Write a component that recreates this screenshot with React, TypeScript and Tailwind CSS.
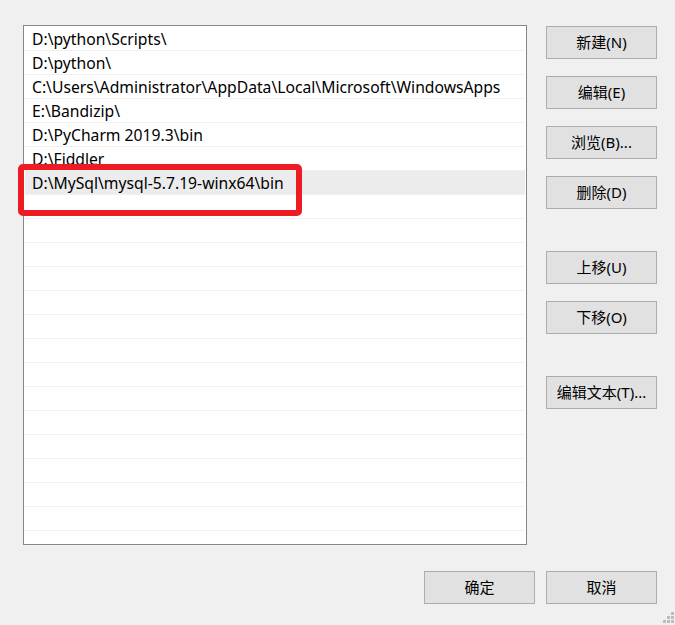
import React from "react";

const paths = [
  "D:\\python\\Scripts\\",
  "D:\\python\\",
  "C:\\Users\\Administrator\\AppData\\Local\\Microsoft\\WindowsApps",
  "E:\\Bandizip\\",
  "D:\\PyCharm 2019.3\\bin",
  "D:\\Fiddler",
  "D:\\MySql\\mysql-5.7.19-winx64\\bin",
];

const TOTAL_ROWS = 21;
const SELECTED = 6;

const Btn = ({ label, className = "" }: { label: string; className?: string }) => (
  <button
    className={`w-[111px] h-[33px] border border-[#adadad] bg-[#e1e1e1] text-[15px] text-black flex items-center justify-center ${className}`}
  >
    {label}
  </button>
);

const App = () => {
  const rows = Array.from({ length: TOTAL_ROWS }, (_, i) => paths[i] ?? "");

  return (
    <div
      className="relative w-[675px] h-[625px] bg-[#f0f0f0] overflow-hidden"
      style={{ fontFamily: '"Noto Sans", "Noto Sans CJK SC", sans-serif' }}
    >
      <div className="flex pl-[23px] pt-[25px] gap-[19px]">
        {/* path list */}
        <div className="relative w-[504px] h-[520px] border border-[#828790] bg-white px-[1px] pt-[1px] overflow-hidden">
          {rows.map((p, i) => (
            <div
              key={i}
              className={`h-[24px] border-b border-[#f0f0f0] pl-[7px] text-[15.7px] leading-[24px] text-black whitespace-nowrap ${
                i === SELECTED ? "bg-[#ececec]" : ""
              }`}
            >
              {p}
            </div>
          ))}
        </div>

        {/* side buttons */}
        <div className="flex flex-col pt-[1px]">
          <Btn label="新建(N)" />
          <Btn label="编辑(E)" className="mt-[17px]" />
          <Btn label="浏览(B)..." className="mt-[17px]" />
          <Btn label="删除(D)" className="mt-[17px]" />
          <Btn label="上移(U)" className="mt-[42px]" />
          <Btn label="下移(O)" className="mt-[17px]" />
          <Btn label="编辑文本(T)..." className="mt-[42px]" />
        </div>
      </div>

      <div className="flex justify-end gap-[11px] pr-[18px] mt-[26px]">
        <Btn label="确定" />
        <Btn label="取消" />
      </div>

      {/* red highlight drawn over the list */}
      <div className="absolute left-[18px] top-[164px] w-[284px] h-[52px] border-[6px] border-[#ed1c24] rounded-[5px]" />

      {/* size grip */}
      <svg className="absolute right-0 bottom-0" width="16" height="16" viewBox="0 0 16 16">
        <g fill="#bcbcbc">
          <rect x="12" y="3" width="3" height="3" />
          <rect x="8" y="7" width="3" height="3" />
          <rect x="12" y="7" width="3" height="3" />
          <rect x="4" y="11" width="3" height="3" />
          <rect x="8" y="11" width="3" height="3" />
          <rect x="12" y="11" width="3" height="3" />
        </g>
      </svg>
    </div>
  );
};

export default App;
